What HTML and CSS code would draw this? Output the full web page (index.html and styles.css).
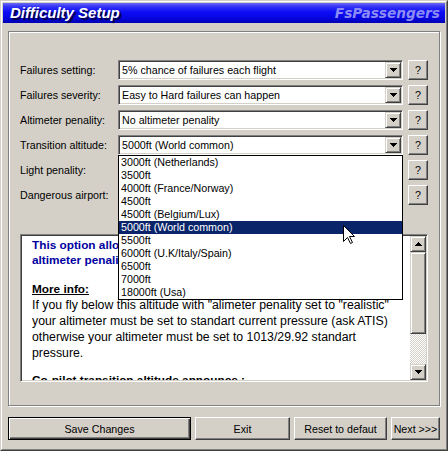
FILE: index.html
```html
<!DOCTYPE html>
<html>
<head>
<meta charset="utf-8">
<title>Difficulty Setup</title>
<link rel="stylesheet" href="styles.css">
</head>
<body>
<div class="window">
  <div class="frame">
    <div class="titlebar">
      <span class="title">Difficulty Setup</span>
      <span class="brand">FsPassengers</span>
    </div>
    <div class="content">
      <div class="group">
        <div class="rows">
          <div class="row">
            <span class="label">Failures setting:</span>
            <div class="combo"><span class="value">5% chance of failures each flight</span><span class="drop"><svg width="7" height="4" viewBox="0 0 7 4"><path d="M0 0h7v1H0zM1 1h5v1H1zM2 2h3v1H2zM3 3h1v1H3z"/></svg></span></div>
            <button class="help">?</button>
          </div>
          <div class="row">
            <span class="label">Failures severity:</span>
            <div class="combo"><span class="value">Easy to Hard failures can happen</span><span class="drop"><svg width="7" height="4" viewBox="0 0 7 4"><path d="M0 0h7v1H0zM1 1h5v1H1zM2 2h3v1H2zM3 3h1v1H3z"/></svg></span></div>
            <button class="help">?</button>
          </div>
          <div class="row">
            <span class="label">Altimeter penality:</span>
            <div class="combo"><span class="value">No altimeter penality</span><span class="drop"><svg width="7" height="4" viewBox="0 0 7 4"><path d="M0 0h7v1H0zM1 1h5v1H1zM2 2h3v1H2zM3 3h1v1H3z"/></svg></span></div>
            <button class="help">?</button>
          </div>
          <div class="row open">
            <span class="label">Transition altitude:</span>
            <div class="combo"><span class="value">5000ft (World common)</span><span class="drop"><svg width="7" height="4" viewBox="0 0 7 4"><path d="M0 0h7v1H0zM1 1h5v1H1zM2 2h3v1H2zM3 3h1v1H3z"/></svg></span></div>
            <button class="help">?</button>
            <div class="list">
              <div class="opt">3000ft (Netherlands)</div>
              <div class="opt">3500ft</div>
              <div class="opt">4000ft (France/Norway)</div>
              <div class="opt">4500ft</div>
              <div class="opt">4500ft (Belgium/Lux)</div>
              <div class="opt sel">5000ft (World common)</div>
              <div class="opt">5500ft</div>
              <div class="opt">6000ft (U.K/Italy/Spain)</div>
              <div class="opt">6500ft</div>
              <div class="opt">7000ft</div>
              <div class="opt">18000ft (Usa)</div>
            </div>
          </div>
          <div class="row">
            <span class="label">Light penality:</span>
            <div class="combo"><span class="value"></span><span class="drop"></span></div>
            <button class="help">?</button>
          </div>
          <div class="row">
            <span class="label">Dangerous airport:</span>
            <div class="combo"><span class="value"></span><span class="drop"></span></div>
            <button class="help">?</button>
          </div>
        </div>
        <div class="info">
          <div class="info-text">
            <p class="intro">This option allows you to set the transition altitude for the<br>altimeter penality and the co-pilot announce.</p>
            <p class="head">More info:</p>
            <p class="body">If you fly below this altitude with "alimeter penality set to "realistic"<br>your altimeter must be set to standart current pressure (ask ATIS)<br>otherwise your altimeter must be set to 1013/29.92 standart<br>pressure.</p>
            <p class="head2">Co-pilot transition altitude announce :</p>
          </div>
          <div class="scrollbar">
            <span class="sb-btn"><svg width="7" height="4" viewBox="0 0 7 4"><path d="M3 0h1v1H3zM2 1h3v1H2zM1 2h5v1H1zM0 3h7v1H0z"/></svg></span>
            <span class="thumb"></span>
            <span class="track"></span>
            <span class="sb-btn"><svg width="7" height="4" viewBox="0 0 7 4"><path d="M0 0h7v1H0zM1 1h5v1H1zM2 2h3v1H2zM3 3h1v1H3z"/></svg></span>
          </div>
        </div>
      </div>
      <div class="buttons">
        <button class="btn default save">Save Changes</button>
        <button class="btn exit">Exit</button>
        <button class="btn reset">Reset to defaut</button>
        <button class="btn next">Next &gt;&gt;&gt;</button>
      </div>
    </div>
  </div>
  <svg class="cursor" width="13" height="20" viewBox="0 0 13 20"><path d="M0.5 0.5V16.5L4.5 12.5L7.5 18.5L9.5 17.5L6.5 11.5H11.5Z" fill="#fff" stroke="#000" stroke-width="1"/></svg>
</div>
</body>
</html>
```
FILE: styles.css
```css
* { box-sizing: border-box; }
html, body { margin: 0; padding: 0; }
body {
  width: 448px;
  height: 451px;
  overflow: hidden;
  background: #d4d0c8;
  font-family: "Liberation Sans", Arial, sans-serif;
  color: #000;
}
.window {
  position: relative;
  width: 448px;
  height: 451px;
  background: #d4d0c8;
  border: 1px solid;
  border-color: #d4d0c8 #404040 #404040 #d4d0c8;
}
.frame {
  height: 100%;
  border: 1px solid;
  border-color: #fff #808080 #808080 #fff;
  padding: 1px;
}
.titlebar {
  height: 20px;
  display: flex;
  justify-content: space-between;
  align-items: center;
  padding: 0 5px 0 7px;
  background: linear-gradient(to bottom, #6a6af2 0%, #3434f6 18%, #0c0cf6 45%, #0606e0 75%, #0000b4 100%);
}
.title {
  color: #fff;
  font: italic bold 15px/20px "Liberation Sans", Arial, sans-serif;
  text-shadow: 2px 2px 1px #00003a;
}
.brand {
  color: #8c8cf4;
  font: oblique bold 13.7px/20px "DejaVu Sans", sans-serif;
}
.content {
  padding: 8px 5px 0 5px;
}
.group {
  border: 1px solid #808080;
  box-shadow: inset 1px 1px 0 #fff, 1px 1px 0 #fff;
  padding: 28px 11px 23px 11px;
}
.rows {
  display: flex;
  flex-direction: column;
  gap: 5px;
}
.row {
  position: relative;
  display: flex;
  align-items: center;
  height: 20px;
}
.label {
  width: 98px;
  font-size: 10.7px;
  white-space: nowrap;
}
.combo {
  width: 285px;
  height: 20px;
  display: flex;
  align-items: center;
  padding: 1px;
  background: #fff;
  border: 1px solid;
  border-color: #808080 #fff #fff #808080;
  box-shadow: inset 1px 1px 0 #404040, inset -1px -1px 0 #d4d0c8;
}
.value {
  flex: 1;
  padding-left: 2px;
  font-size: 10.7px;
  white-space: nowrap;
  overflow: hidden;
}
.drop, .sb-btn {
  width: 16px;
  height: 16px;
  display: flex;
  align-items: center;
  justify-content: center;
  background: #d4d0c8;
  border: 1px solid;
  border-color: #d4d0c8 #404040 #404040 #d4d0c8;
  box-shadow: inset 1px 1px 0 #fff, inset -1px -1px 0 #808080;
}
.drop svg, .sb-btn svg { display: block; }
.help, .btn {
  margin: 0;
  padding: 0;
  background: #d4d0c8;
  border: 1px solid;
  border-color: #fff #404040 #404040 #fff;
  box-shadow: inset -1px -1px 0 #808080, inset 1px 1px 0 #d4d0c8;
  font-family: "Liberation Sans", Arial, sans-serif;
  font-size: 10.7px;
  color: #000;
}
.help {
  width: 20px;
  height: 20px;
  margin-left: 5px;
}
.list {
  position: absolute;
  left: 98px;
  top: 20px;
  width: 285px;
  border: 1px solid #000;
  background: #fff;
  z-index: 5;
}
.opt {
  height: 13px;
  line-height: 13px;
  padding-left: 2px;
  font-size: 10.7px;
  white-space: nowrap;
}
.opt.sel {
  background: #0a246a;
  color: #fff;
}
.info {
  margin-top: 29px;
  height: 148px;
  display: flex;
  padding: 1px;
  background: #fff;
  border: 1px solid;
  border-color: #808080 #fff #fff #808080;
  box-shadow: inset 1px 1px 0 #404040, inset -1px -1px 0 #d4d0c8;
}
.info-text {
  flex: 1;
  overflow: hidden;
  padding: 2px 0 0 10px;
  font-size: 12.3px;
  line-height: 16px;
  white-space: nowrap;
}
.info-text p { margin: 0; }
.intro {
  font-weight: bold;
  font-size: 11.8px;
  line-height: 15px;
  color: #0000a0;
}
.head {
  margin-top: 13px !important;
  font-weight: bold;
  font-size: 11.8px;
  text-decoration: underline;
}
.head2 {
  margin-top: 11px !important;
  font-weight: bold;
  font-size: 11.8px;
}
.scrollbar {
  width: 16px;
  display: flex;
  flex-direction: column;
}
.thumb {
  height: 82px;
  background: #d4d0c8;
  border: 1px solid;
  border-color: #d4d0c8 #404040 #404040 #d4d0c8;
  box-shadow: inset 1px 1px 0 #fff, inset -1px -1px 0 #808080;
}
.track {
  flex: 1;
  background: repeating-conic-gradient(#d4d0c8 0 25%, #fff 0 50%) 0 0 / 2px 2px;
}
.buttons {
  display: flex;
  gap: 4px;
  margin-top: 11px;
}
.btn { height: 23px; }
.btn.default {
  border: 1px solid #000;
  box-shadow: inset 1px 1px 0 #fff, inset -1px -1px 0 #404040, inset -2px -2px 0 #808080;
}
.save { width: 183px; }
.exit { width: 95px; }
.reset { width: 93px; }
.next { width: 49px; }
.cursor {
  position: absolute;
  left: 342px;
  top: 224px;
  z-index: 10;
}
```
